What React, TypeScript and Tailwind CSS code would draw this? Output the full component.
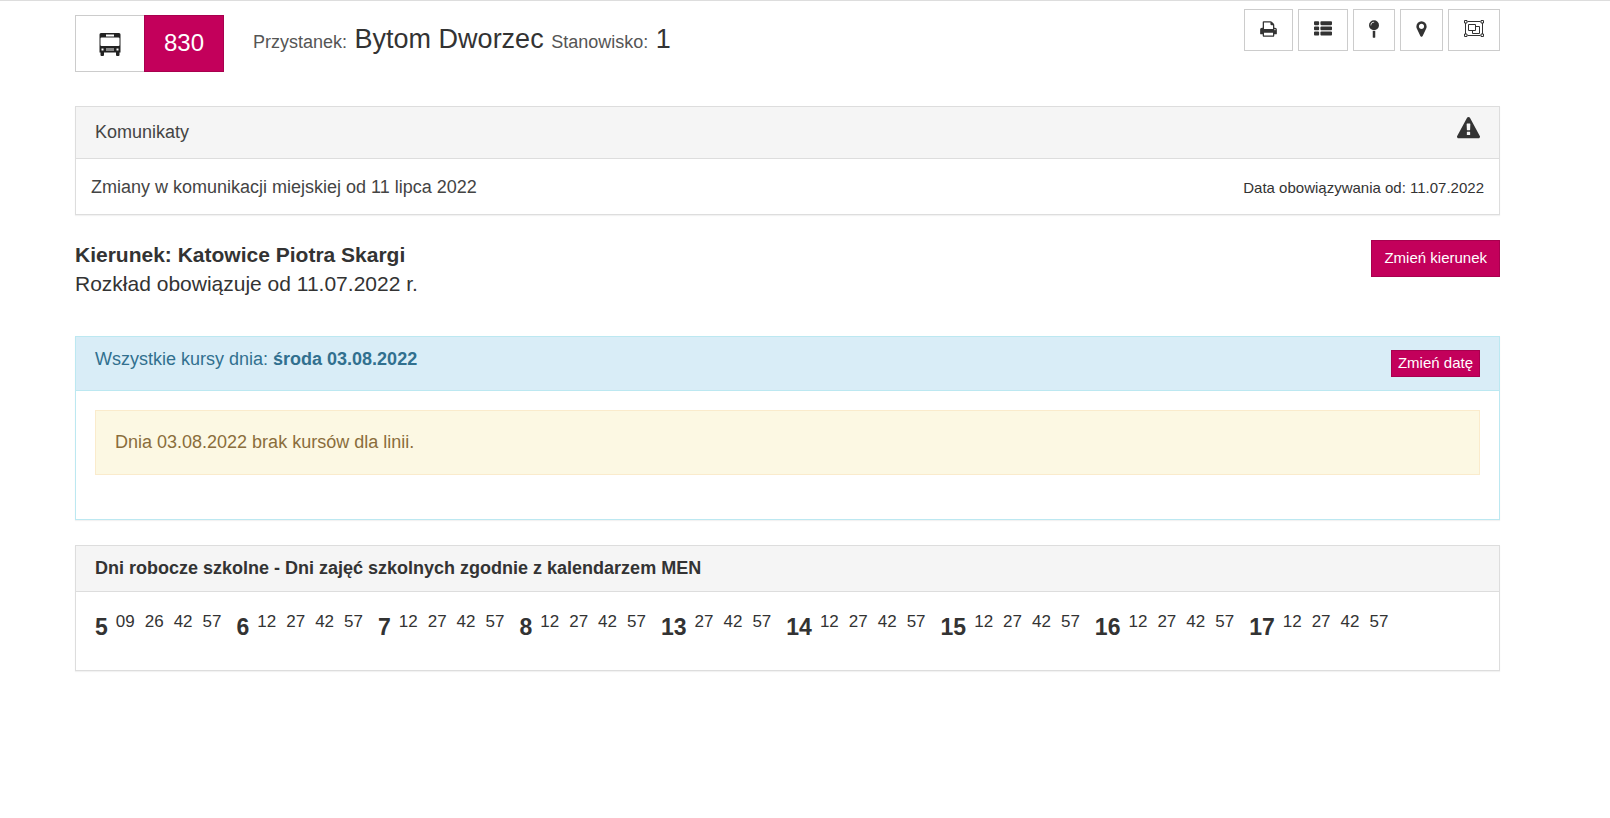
import type { ReactNode } from "react";

const departures = [
  { hour: "5", minutes: ["09", "26", "42", "57"] },
  { hour: "6", minutes: ["12", "27", "42", "57"] },
  { hour: "7", minutes: ["12", "27", "42", "57"] },
  { hour: "8", minutes: ["12", "27", "42", "57"] },
  { hour: "13", minutes: ["27", "42", "57"] },
  { hour: "14", minutes: ["12", "27", "42", "57"] },
  { hour: "15", minutes: ["12", "27", "42", "57"] },
  { hour: "16", minutes: ["12", "27", "42", "57"] },
  { hour: "17", minutes: ["12", "27", "42", "57"] },
];

function BusIcon() {
  return (
    <svg className="h-6 w-[22px]" viewBox="0 0 22 24" aria-hidden="true">
      <path
        fill="#222"
        fillRule="evenodd"
        d="M2 0h18a1.500 1.500 0 0 1 1.500 1.500V19.500H20.500V22a1 1 0 0 1-1 1h-1.500a1 1 0 0 1-1-1v-2.500H5V22a1 1 0 0 1-1 1H2.500a1 1 0 0 1-1-1v-2.500H.5v-18A1.500 1.500 0 0 1 2 0zM7 1.500V3.500h8V1.500zM2.500 4.500a1 1 0 0 0-1 1v6.500a1 1 0 0 0 1 1h17a1 1 0 0 0 1-1V5.500a1 1 0 0 0-1-1zM2.500 15.500v2h2v-2zM17.500 15.500v2h2v-2z"
      />
      <path fill="#888" d="M7 15h8v3H7z" />
    </svg>
  );
}

function WarningIcon() {
  return (
    <svg className="h-[23px] w-[23px]" viewBox="0 0 1792 1792" fill="#333" aria-hidden="true">
      <path d="M1024 1375v-190q0-14-9.500-23.500t-22.500-9.500h-192q-13 0-22.500 9.500t-9.500 23.500v190q0 14 9.500 23.500t22.500 9.500h192q13 0 22.500-9.500t9.500-23.500zm-2-374l18-459q0-12-10-19-13-11-24-11h-220q-11 0-24 11-10 7-10 21l17 457q0 10 10 16.500t24 6.500h185q14 0 23.500-6.500t10.500-16.500zm-14-934l768 1408q35 63-2 126-17 29-46.500 46t-63.500 17h-1536q-34 0-63.500-17t-46.500-46q-37-63-2-126l768-1408q17-31 47-49t65-18 65 18 47 49z" />
    </svg>
  );
}

function PrintIcon() {
  return (
    <svg className="h-[18px] w-[17px]" viewBox="64 0 1664 1792" fill="currentColor" aria-hidden="true">
      <path d="M448 1536h896v-256h-896v256zm0-640h896v-384h-160q-40 0-68-28t-28-68v-160h-640v640zm1152 64q0-26-19-45t-45-19-45 19-19 45 19 45 45 19 45-19 19-45zm128 0v416q0 13-9.500 22.500t-22.500 9.500h-224v160q0 40-28 68t-68 28h-960q-40 0-68-28t-28-68v-160h-224q-13 0-22.500-9.500t-9.500-22.500v-416q0-79 56.500-135.500t135.500-56.500h64v-544q0-40 28-68t68-28h672q40 0 88 20t76 48l152 152q28 28 48 76t20 88v256h64q79 0 135.500 56.500t56.500 135.500z" />
    </svg>
  );
}

function ListIcon() {
  return (
    <svg className="h-[18px] w-[18px]" viewBox="0 0 1792 1792" fill="currentColor" aria-hidden="true">
      <path d="M512 1248v192q0 40-28 68t-68 28h-320q-40 0-68-28t-28-68v-192q0-40 28-68t68-28h320q40 0 68 28t28 68zm0-512v192q0 40-28 68t-68 28h-320q-40 0-68-28t-28-68v-192q0-40 28-68t68-28h320q40 0 68 28t28 68zm1280 512v192q0 40-28 68t-68 28h-960q-40 0-68-28t-28-68v-192q0-40 28-68t68-28h960q40 0 68 28t28 68zm-1280-1024v192q0 40-28 68t-68 28h-320q-40 0-68-28t-28-68v-192q0-40 28-68t68-28h320q40 0 68 28t28 68zm1280 512v192q0 40-28 68t-68 28h-960q-40 0-68-28t-28-68v-192q0-40 28-68t68-28h960q40 0 68 28t28 68zm0-512v192q0 40-28 68t-68 28h-960q-40 0-68-28t-28-68v-192q0-40 28-68t68-28h960q40 0 68 28t28 68z" />
    </svg>
  );
}

function PinIcon() {
  return (
    <svg className="h-[18px] w-2.5" viewBox="384 0 1024 1792" fill="currentColor" aria-hidden="true">
      <path d="M896 1088q66 0 128-15v655q0 26-19 45t-45 19h-128q-26 0-45-19t-19-45v-655q62 15 128 15zm0-1088q212 0 362 150t150 362-150 362-362 150-362-150-150-362 150-362 362-150zm0 224q14 0 23-9t9-23-9-23-23-9q-146 0-249 103t-103 249q0 14 9 23t23 9 23-9 9-23q0-119 84.500-203.500t203.500-84.500z" />
    </svg>
  );
}

function MarkerIcon() {
  return (
    <svg className="h-[18px] w-[11px]" viewBox="384 0 1024 1792" fill="currentColor" aria-hidden="true">
      <path d="M1152 640q0-106-75-181t-181-75-181 75-75 181 75 181 181 75 181-75 75-181zm256 0q0 109-33 179l-364 774q-16 33-47.500 52t-67.500 19-67.500-19-46.500-52l-365-774q-33-70-33-179 0-212 150-362t362-150 362 150 150 362z" />
    </svg>
  );
}

function ObjectGroupIcon() {
  return (
    <svg
      className="h-[18px] w-5"
      viewBox="0 0 20 18"
      fill="none"
      stroke="currentColor"
      aria-hidden="true"
    >
      <path d="M3.500 1.500h13M3.500 15.500h13M1.500 3v11M18.500 3v11" />
      <path d="M.5.5h2.500v2.500H.5zM17 .5h2.500v2.500H17zM.5 14h2.500v2.500H.5zM17 14h2.500v2.500H17z" />
      <path d="M4.500 4.500h7v6h-7zM12 6.500h3.500v7h-7V11" />
    </svg>
  );
}

const tools = [
  { label: "Drukuj", icon: <PrintIcon /> },
  { label: "Lista przystanków", icon: <ListIcon /> },
  { label: "Przystanek", icon: <PinIcon /> },
  { label: "Mapa", icon: <MarkerIcon /> },
  { label: "Grupa stanowisk", icon: <ObjectGroupIcon /> },
];

function Panel({ className, children }: { className: string; children: ReactNode }) {
  return (
    <section className={`border bg-white shadow-[0_1px_1px_rgba(0,0,0,0.05)] ${className}`}>
      {children}
    </section>
  );
}

export default function App() {
  return (
    <div className="min-h-screen border-t border-[#ddd] bg-white pl-[75px] pr-[110px] font-['Liberation_Sans',Arial,sans-serif] text-lg text-[#333]">
      <header className="flex items-start justify-between pt-2">
        <div className="flex items-start pt-1.5">
          <div className="flex h-[57px]">
            <a
              href="#linie"
              aria-label="Linie autobusowe"
              className="flex w-[69px] items-center justify-center border border-r-0 border-[#ccc] pt-0.5"
            >
              <BusIcon />
            </a>
            <a
              href="#linia-830"
              className="flex items-center border border-[#a8004e] bg-[#c3005b] px-[19px] pb-0.5 text-2xl text-white"
            >
              830
            </a>
          </div>
          <h1 className="ml-[29px] pt-1 text-[27px] leading-10">
            <span className="text-lg text-[#555]">Przystanek:</span> Bytom Dworzec{" "}
            <span className="text-lg text-[#555]">Stanowisko:</span> 1
          </h1>
        </div>

        <div className="flex gap-[5px]">
          {tools.map((tool) => (
            <button
              key={tool.label}
              type="button"
              aria-label={tool.label}
              className="h-[42px] border border-[#ccc] bg-white px-[15px] pb-3 pt-2.5"
            >
              {tool.icon}
            </button>
          ))}
        </div>
      </header>

      <main>
        <Panel className="mt-[34px] border-[#ddd]">
          <div className="flex h-[52px] items-start justify-between border-b border-[#ddd] bg-[#f5f5f5] px-[19px]">
            <h2 className="pt-3 leading-[26px] text-[#444]">Komunikaty</h2>
            <div className="pt-2.5">
              <WarningIcon />
            </div>
          </div>
          <div className="flex items-center justify-between px-[15px] pb-3.5 pt-4 leading-[25px]">
            <a href="#komunikat" className="text-[#444]">
              Zmiany w komunikacji miejskiej od 11 lipca 2022
            </a>
            <span className="text-[15px]">Data obowiązywania od: 11.07.2022</span>
          </div>
        </Panel>

        {/* Direction */}
        <div className="mt-[25px] flex items-start justify-between">
          <div className="text-[21px] leading-[29px]">
            <p className="font-bold">Kierunek: Katowice Piotra Skargi</p>
            <p>Rozkład obowiązuje od 11.07.2022 r.</p>
          </div>
          <button
            type="button"
            className="h-[37px] border border-[#a8004e] bg-[#c3005b] px-3 pb-0.5 text-[15px] text-white"
          >
            Zmień kierunek
          </button>
        </div>

        {/* Courses of the chosen day */}
        <Panel className="mt-[38px] border-[#bce8f1]">
          <div className="flex items-start justify-between border-b border-[#bce8f1] bg-[#d9edf7] px-[19px] py-[13px] text-[#31708f]">
            <h2 className="leading-[18px]">
              Wszystkie kursy dnia: <strong>środa 03.08.2022</strong>
            </h2>
            <button
              type="button"
              className="h-[27px] border border-[#a8004e] bg-[#c3005b] px-1.5 pb-0.5 text-[15px] text-white"
            >
              Zmień datę
            </button>
          </div>
          <div className="px-[19px] pb-11 pt-[19px]">
            <p
              role="alert"
              className="border border-[#faebcc] bg-[#fcf8e3] px-[19px] py-[19px] leading-[25px] text-[#8a6d3b]"
            >
              Dnia 03.08.2022 brak kursów dla linii.
            </p>
          </div>
        </Panel>

        {/* Timetable */}
        <Panel className="mt-[25px] border-[#ddd]">
          <h2 className="border-b border-[#ddd] bg-[#f5f5f5] px-[19px] py-3 font-bold leading-[21px]">
            Dni robocze szkolne - Dni zajęć szkolnych zgodnie z kalendarzem MEN
          </h2>
          <ul className="flex flex-wrap gap-x-[15px] px-[19px] pb-[29px] pt-[19px]">
            {departures.map(({ hour, minutes }) => (
              <li key={hour} className="flex items-start">
                <strong className="pt-0.5 text-[23px] leading-7">{hour}</strong>
                <span className="ml-2 flex gap-2.5 text-[17px] leading-[22px]">
                  {minutes.map((minute) => (
                    <span key={minute}>{minute}</span>
                  ))}
                </span>
              </li>
            ))}
          </ul>
        </Panel>
      </main>
    </div>
  );
}
